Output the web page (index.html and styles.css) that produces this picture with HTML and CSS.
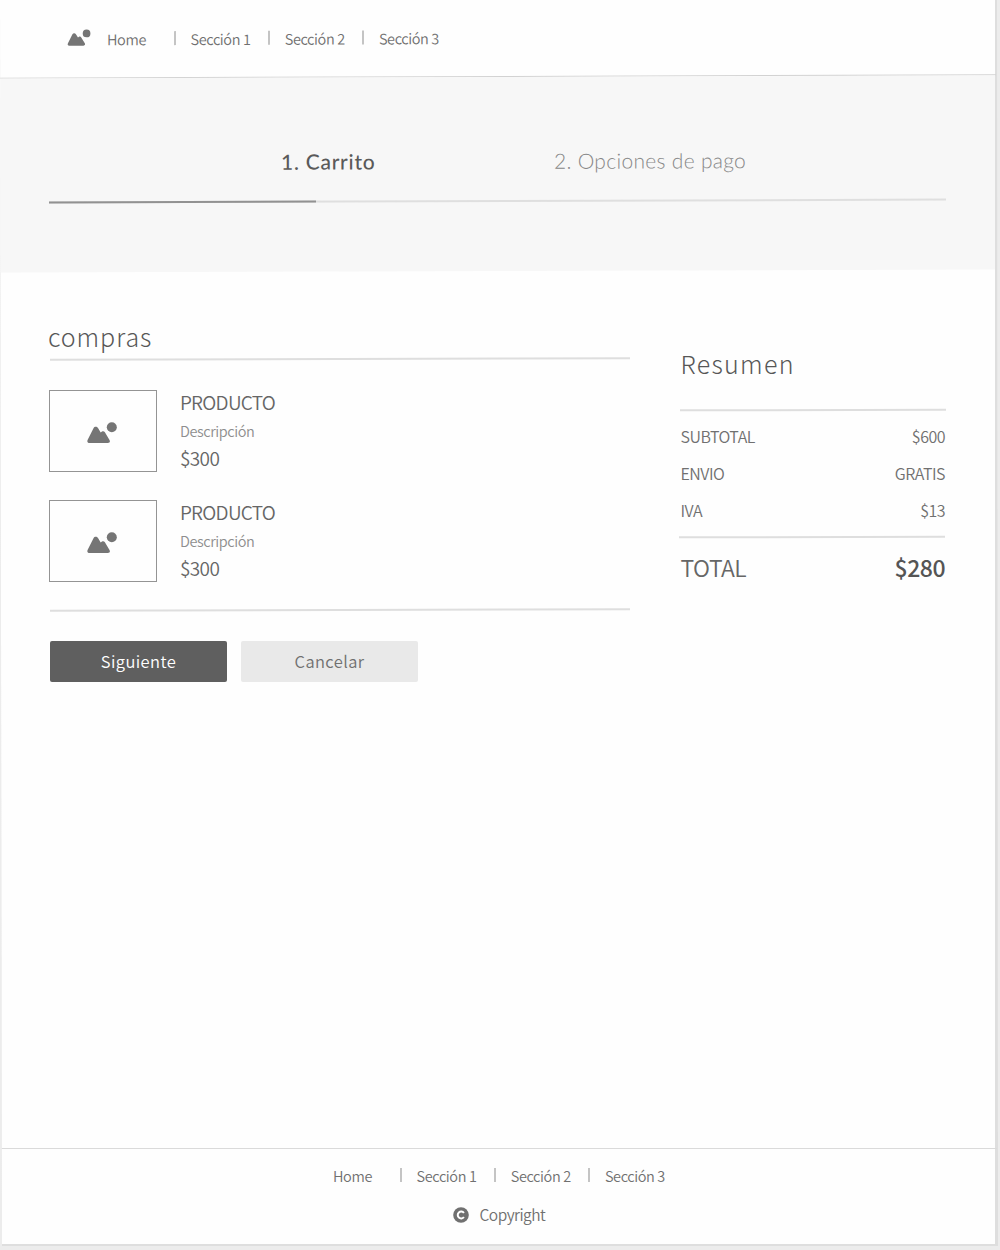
FILE: index.html
```html
<!DOCTYPE html>
<html lang="es">
<head>
<meta charset="utf-8">
<title>Carrito</title>
<link rel="stylesheet" href="styles.css">
</head>
<body>
<svg class="defs" width="0" height="0" aria-hidden="true">
  <symbol id="picture" viewBox="0 0 30 22" overflow="visible">
    <path d="M2.500 21C.6 21-.2 19.500 .7 17.800L6.500 6.300C7.500 4.400 9.900 4.400 11 6.100L13.700 10.500L15 9.500C16 8.800 17.200 9.100 17.900 10.300L22.500 18C23.400 19.500 22.800 21 20.800 21Z"/>
    <circle cx="24.800" cy="5.200" r="5"/>
  </symbol>
</svg>
<div class="page">
  <header class="header">
    <svg class="logo"><use href="#picture"/></svg>
    <nav class="nav">
      <a class="home">Home</a><a class="item">Sección 1</a><a class="item">Sección 2</a><a class="item">Sección 3</a>
    </nav>
  </header>
  <section class="steps">
    <div class="labels"><h1 class="step current">1. Carrito</h1><h1 class="step">2. Opciones de pago</h1></div>
    <div class="progress"><div class="done"></div></div>
  </section>
  <main class="main">
    <section class="cart">
      <h2 class="title">compras</h2>
      <div class="rule"></div>
      <div class="products">
        <article class="product">
          <div class="thumb"><svg class="pic"><use href="#picture"/></svg></div>
          <div class="info"><h3 class="name">PRODUCTO</h3><p class="desc">Descripción</p><p class="price">$300</p></div>
        </article>
        <article class="product">
          <div class="thumb"><svg class="pic"><use href="#picture"/></svg></div>
          <div class="info"><h3 class="name">PRODUCTO</h3><p class="desc">Descripción</p><p class="price">$300</p></div>
        </article>
      </div>
      <div class="rule"></div>
      <div class="actions"><button class="btn primary">Siguiente</button><button class="btn">Cancelar</button></div>
    </section>
    <aside class="summary">
      <h2 class="title">Resumen</h2>
      <div class="rule"></div>
      <dl class="rows">
        <div class="row"><dt>SUBTOTAL</dt><dd>$600</dd></div>
        <div class="row"><dt>ENVIO</dt><dd>GRATIS</dd></div>
        <div class="row"><dt>IVA</dt><dd>$13</dd></div>
      </dl>
      <div class="rule second"></div>
      <div class="total"><span>TOTAL</span><strong class="amount">$280</strong></div>
    </aside>
  </main>
  <footer class="footer">
    <nav class="nav">
      <a class="home">Home</a><a class="item">Sección 1</a><a class="item">Sección 2</a><a class="item">Sección 3</a>
    </nav>
    <div class="copyright">
      <svg class="mark" viewBox="0 0 16 16"><circle cx="8" cy="8" r="7.800" fill="#707070"/><path d="M10.900 6A3.400 3.400 0 1 0 10.900 10" fill="none" stroke="#fff" stroke-width="2"/></svg>
      <span>Copyright</span>
    </div>
  </footer>
</div>
</body>
</html>
```
FILE: styles.css
```css
* { box-sizing: border-box; margin: 0; padding: 0; }
body {
  height: 1250px;
  overflow: hidden;
  background: #ececec;
  font-family: "Noto Sans CJK JP", "Noto Sans", sans-serif;
  font-weight: 350;
  color: #707070;
}
.defs { position: absolute; }
.page {
  height: 1246px;
  width: 998px;
  display: flex;
  flex-direction: column;
  background: linear-gradient(#fefefe, #fefefe) 0 0 / 995px 1244px no-repeat #dedede;
  clip-path: polygon(0 0, 997px 0, 998px 100%, 2px 100%);
}
.header {
  height: 77px;
  width: 996px;
  display: flex;
  padding: 0 0 0 67px;
  border-bottom: 1px solid #d2d2d2;
  transform: skewY(-.2deg);
}
.logo { width: 24px; height: 17px; margin: 28px 16px 0 0; fill: #757575; overflow: visible; }
.nav { display: flex; font-size: 14.5px; line-height: 24px; letter-spacing: -.38px; }
.header .nav { padding-top: 26px; }
.home { width: 67px; }
.item { width: 94.200px; padding-left: 16.500px; background: linear-gradient(#c4c4c4, #c4c4c4) 0 4px / 2px 14px no-repeat; white-space: nowrap; }
.steps {
  height: 194px;
  width: 995px;
  padding: 69px 49px 0 49px;
  background: #f7f7f7;
  transform: skewY(-.18deg);
}
.labels { display: flex; padding-left: 232px; height: 54px; }
.step { font: 300 21px/30px Lato, sans-serif; letter-spacing: .3px; color: #888; white-space: nowrap; }
.current { width: 273px; font-weight: 500; letter-spacing: .75px; color: #5a5a5a; }
.progress { height: 2px; background: #dfdfdf; }
.done { width: 267px; height: 2px; background: #929292; }
.main { flex: 1; display: flex; gap: 50px; padding: 47px 51px 0 50px; width: 997px; }
.cart { width: 581px; }
.title { font-size: 25px; font-weight: 300; line-height: 36px; letter-spacing: 1.300px; color: #575757; }
.cart .title { height: 40px; margin-left: -2px; letter-spacing: .9px; }
.products { display: flex; flex-direction: column; gap: 28px; padding: 30px 0 27px; }
.product { display: flex; gap: 22.500px; height: 82px; margin-left: -.600px; }
.thumb { width: 108px; height: 82px; border: 1px solid #949494; display: flex; padding: 31px 0 0 37px; }
.pic { width: 30px; height: 22px; fill: #757575; }
.name { font-size: 19px; font-weight: 350; line-height: 23px; letter-spacing: -.700px; color: #666; }
.desc { font-size: 14.500px; line-height: 32px; letter-spacing: -.4px; color: #8e8e8e; padding-top: 2px; }
.price { font-size: 19px; line-height: 22px; letter-spacing: -.6px; color: #666; }
.rule { height: 2px; background: #dedede; transform: skewY(-.15deg); }
.actions { display: flex; gap: 14px; margin-top: 30px; }
.btn { width: 177px; height: 41px; border: 0; border-radius: 2px; background: #e9e9e9; color: #707070; font: 350 16.500px/38px "Noto Sans CJK JP", sans-serif; letter-spacing: .4px; padding-bottom: 2px; }
.primary { background: #5f5f5f; color: #fff; }
.summary { width: 266px; margin-left: .500px; padding-top: 27px; }
.summary .title { height: 64px; }
.rows { padding: 7px 1px 0 0; height: 125px; font-size: 16px; line-height: 37px; letter-spacing: -.5px; }
.row { display: flex; justify-content: space-between; }
.second { margin-left: -1px; margin-right: 1px; }
.total { display: flex; justify-content: space-between; padding: 11px 1px 0 0; font-size: 23px; line-height: 36px; letter-spacing: -.5px; color: #666; }
.amount { font-weight: 500; color: #555; }
.footer {
  height: 98px;
  width: 997px;
  border-top: 1px solid #dadada;
  padding: 15px 0 0 333px;
}
.copyright { display: flex; gap: 11px; padding: 13px 0 0 119.500px; font-size: 15.500px; line-height: 26px; letter-spacing: -.5px; }
.mark { width: 16px; height: 16px; margin-top: 6px; }
```
